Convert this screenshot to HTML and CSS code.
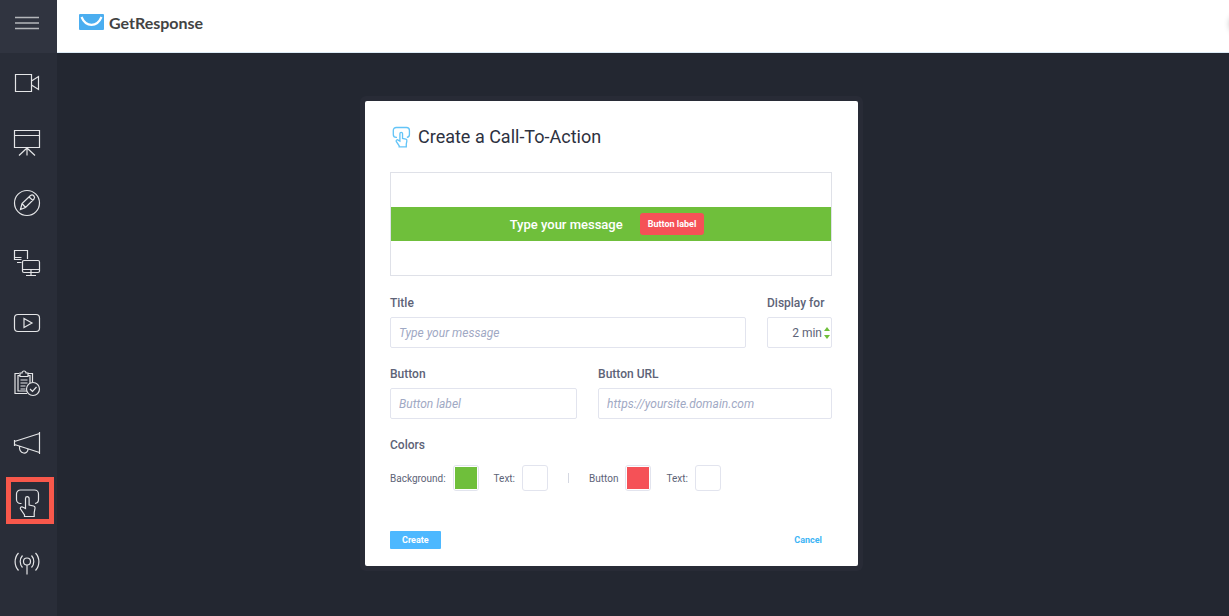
FILE: index.html
```html
<!DOCTYPE html>
<html lang="en">
<head>
    <meta charset="UTF-8">
    <meta name="viewport" content="width=device-width, initial-scale=1.0">
    <title>GetResponse - Create a Call-To-Action</title>
    <link rel="stylesheet" href="styles.css">
</head>
<body>
    <svg class="symbols" aria-hidden="true">
        <symbol id="tap" viewBox="0 0 30 30">
            <path d="M9.500 15.500H8.500a4 4 0 0 1-4-4V6a4 4 0 0 1 4-4h14a4 4 0 0 1 4 4v5.500a4 4 0 0 1-3.500 4"/>
            <path d="M13.500 20.500V10.500a1.800 1.800 0 0 1 3.600 0v6.500l4.500 1a2 2 0 0 1 1.400 2.200l-.8 4.500V28.500H12.500v-1.500L8.500 21c-.6-1.800 1.300-2.800 2.600-1.800z"/>
        </symbol>
    </svg>

    <div class="layout">
        <aside class="sidebar">
            <button class="menu-toggle" type="button" aria-label="Menu">
                <svg class="icon" viewBox="0 0 30 30"><path d="M3 9.500h24M3 15h24M3 20.500h24"/></svg>
            </button>
            <nav class="tools">
                <a href="#" class="tool" aria-label="Camera">
                    <svg class="icon" viewBox="0 0 30 30"><path d="M3.500 6.500h16v17h-16zM19.500 13l7-4.500v13l-7-4.500"/></svg>
                </a>
                <a href="#" class="tool" aria-label="Presentation">
                    <svg class="icon" viewBox="0 0 30 30"><path d="M2.500 2.500h25v17h-25zM2.500 7.500h25M15 19.500v8M15 20l-8 7.500M15 20l8 7.500"/></svg>
                </a>
                <a href="#" class="tool" aria-label="Whiteboard">
                    <svg class="icon" viewBox="0 0 30 30"><circle cx="15" cy="15" r="12.500"/><path d="M8.500 21.500l1.500-6L18.500 7.500a2.500 2.500 0 0 1 3.500 3.500l-8.500 8.500zM10 15.500l3.500 4M17 9l4 3.500"/></svg>
                </a>
                <a href="#" class="tool" aria-label="Screen sharing">
                    <svg class="icon" viewBox="0 0 30 30"><path d="M9.500 11.500h-7v-9h13v8.500M2.500 9.500h7M5 14.500h4.500"/><rect x="10.500" y="12.500" width="17" height="12" rx="1.500"/><path d="M10.500 21.500h17M19 21.500v6M14 27.500h10"/></svg>
                </a>
                <a href="#" class="tool" aria-label="Video">
                    <svg class="icon" viewBox="0 0 30 30"><rect x="2.500" y="6.500" width="25" height="17" rx="3.500"/><path d="M12 10.500v9l8-4.500z"/></svg>
                </a>
                <a href="#" class="tool" aria-label="Survey">
                    <svg class="icon" viewBox="0 0 30 30"><path d="M15 25.500H3v-20h4M15 23H6V7.500h2M20.500 14V5.500h-4M18 15V7.500h-2M8 8.500V5h2a2 2 0 0 1 4 0h2v3.500zM8.500 12h7M8.500 15h7M8.500 18h5M8.500 21h5"/><circle cx="21" cy="21" r="6.500"/><path d="M18 21l2.500 2.500 4-4.500"/></svg>
                </a>
                <a href="#" class="tool" aria-label="Announcement">
                    <svg class="icon" viewBox="0 0 30 30"><path d="M2.500 12v6M2.500 13.500l25-8M2.500 16.500l25 8M27.500 4v22M7.500 18.500c-.5 8 8.500 8.500 8.500 2.500"/></svg>
                </a>
                <a href="#" class="tool tool-active" aria-label="Call-To-Action">
                    <svg class="icon"><use href="#tap"/></svg>
                </a>
                <a href="#" class="tool" aria-label="Broadcast">
                    <svg class="icon" viewBox="0 0 30 30"><circle cx="15" cy="13.500" r="3.500"/><path d="M15 17v9.500M10.500 7.500a9 9 0 0 0 0 12M19.500 7.500a9 9 0 0 1 0 12M6.500 5a13 13 0 0 0 0 17.500M23.500 5a13 13 0 0 1 0 17.500"/></svg>
                </a>
            </nav>
        </aside>

        <div class="page">
            <header class="header">
                <a href="#" class="logo">
                    <svg class="logo-mark" viewBox="0 0 25 16" aria-hidden="true">
                        <rect width="25" height="16" rx="1" fill="#4baef0"/>
                        <path d="M2.500 3c4.500 10.500 15.500 10.500 20 0" fill="none" stroke="#fff" stroke-width="2.200"/>
                    </svg>
                    GetResponse
                </a>
            </header>

            <main class="stage">
                <form class="modal">
                    <h1 class="modal-title">
                        <svg class="modal-icon"><use href="#tap"/></svg>
                        Create a Call-To-Action
                    </h1>

                    <div class="preview">
                        <div class="preview-bar">
                            <span>Type your message</span>
                            <button class="preview-button" type="button">Button label</button>
                        </div>
                    </div>

                    <div class="row row-title">
                        <div class="field">
                            <label for="title">Title</label>
                            <input type="text" id="title" placeholder="Type your message">
                        </div>
                        <div class="field">
                            <label for="duration">Display for</label>
                            <div class="stepper">
                                <input type="text" id="duration" value="2 min">
                                <div class="stepper-buttons">
                                    <button type="button" class="step step-up" aria-label="More"></button>
                                    <button type="button" class="step step-down" aria-label="Less"></button>
                                </div>
                            </div>
                        </div>
                    </div>

                    <div class="row row-button">
                        <div class="field">
                            <label for="buttonLabel">Button</label>
                            <input type="text" id="buttonLabel" placeholder="Button label">
                        </div>
                        <div class="field">
                            <label for="buttonUrl">Button URL</label>
                            <input type="text" id="buttonUrl" placeholder="https://yoursite.domain.com">
                        </div>
                    </div>

                    <h2 class="colors-title">Colors</h2>
                    <div class="colors">
                        <label class="color">Background: <input type="color" value="#6fbf3b"></label>
                        <label class="color">Text: <input type="color" value="#ffffff"></label>
                        <span class="divider"></span>
                        <label class="color">Button <input type="color" value="#f55157"></label>
                        <label class="color">Text: <input type="color" value="#ffffff"></label>
                    </div>

                    <div class="actions">
                        <button class="create" type="submit">Create</button>
                        <button class="cancel" type="button">Cancel</button>
                    </div>
                </form>
            </main>
        </div>
    </div>
</body>
</html>
```
FILE: styles.css
```css
*,
*::after {
    box-sizing: border-box;
}
body {
    margin: 0;
    font-family: Roboto, sans-serif;
    background-color: #232731;
    color: #5d6377;
}
button {
    padding: 0;
    border: none;
    background: none;
    font-family: inherit;
    cursor: pointer;
}
.symbols {
    position: absolute;
    width: 0;
    height: 0;
}
.layout {
    display: flex;
    min-height: 100vh;
}

/* Sidebar */
.sidebar {
    flex: none;
    width: 57px;
    background-color: #292d38;
}
.menu-toggle {
    display: flex;
    align-items: center;
    width: 100%;
    height: 53px;
    padding: 0 0 7px 12px;
    background-color: #303440;
}
.icon {
    width: 30px;
    height: 30px;
    fill: none;
    stroke: #e4e5e7;
    stroke-width: 1.2;
}
.menu-toggle .icon {
    stroke: #b4b6ba;
    stroke-width: 1.5;
}
.tool {
    position: relative;
    display: flex;
    align-items: center;
    height: 60px;
    padding-left: 12px;
}
.tool-active::after {
    content: "";
    position: absolute;
    top: 4px;
    left: 6px;
    width: 48px;
    height: 47px;
    border: 5px solid #f8584b;
}

/* Header */
.page {
    flex: 1;
    display: flex;
    flex-direction: column;
    min-width: 0;
}
.header {
    position: relative;
    display: flex;
    align-items: center;
    height: 53px;
    padding: 0 22px 8px;
    overflow: hidden;
    background-color: #fff;
    border-bottom: 1px solid #dcebf6;
}
.header::after {
    content: "";
    position: absolute;
    top: 15px;
    right: -19px;
    width: 18px;
    height: 18px;
    border-radius: 50%;
    box-shadow: 0 0 6px rgba(0, 0, 0, 0.3);
}
.logo {
    display: flex;
    align-items: center;
    gap: 5px;
    color: #434343;
    font-family: Lato, sans-serif;
    font-size: 16px;
    font-weight: 700;
    text-decoration: none;
}
.logo-mark {
    width: 25px;
    height: 16px;
}

/* Modal */
.stage {
    display: flex;
    justify-content: center;
    align-items: flex-start;
    padding: 48px 63px 48px 0;
}
.modal {
    width: 100%;
    max-width: 493px;
    padding: 25px 26px 17px 25px;
    background-color: #fff;
    border-radius: 2px;
    box-shadow: 0 0 0 5px #282b36;
}
.modal-title {
    display: flex;
    align-items: center;
    gap: 6px;
    margin: 0 0 24px;
    color: #2d3140;
    font-size: 18px;
    font-weight: 400;
    line-height: 20px;
}
.modal-icon {
    width: 22px;
    height: 22px;
    fill: none;
    stroke: #63c4f7;
    stroke-width: 1.8;
}
.preview {
    padding: 34px 0;
    margin-bottom: 19px;
    border: 1px solid #dfe1e8;
}
.preview-bar {
    display: flex;
    justify-content: center;
    align-items: center;
    gap: 17px;
    height: 34px;
    padding-right: 8px;
    background-color: #6fbf3b;
    color: #fff;
    font-size: 13px;
    font-weight: 500;
}
.preview-button {
    height: 22px;
    padding: 0 8px;
    border-radius: 3px;
    background-color: #f55157;
    color: #fff;
    font-size: 9px;
    font-weight: 700;
}
.row {
    display: grid;
    gap: 21px;
    margin-bottom: 18px;
}
.row-title {
    grid-template-columns: 1fr 65px;
}
.row-button {
    grid-template-columns: 4fr 5fr;
}
.field label,
.colors-title {
    display: block;
    margin: 0 0 6px;
    font-size: 12px;
    font-weight: 500;
    line-height: 16px;
}
.field input {
    display: block;
    width: 100%;
    height: 31px;
    padding: 0 8px;
    border: 1px solid #e2e4ee;
    border-radius: 2px;
    color: #5d6377;
    font-family: inherit;
    font-size: 12px;
}
.field input::placeholder {
    color: #9fa9c4;
    font-style: italic;
}
.stepper {
    position: relative;
}
.stepper input {
    padding-right: 9px;
    text-align: right;
}
.stepper-buttons {
    position: absolute;
    top: 10px;
    right: 2px;
    display: flex;
    flex-direction: column;
    gap: 4px;
}
.step {
    border-left: 3px solid transparent;
    border-right: 3px solid transparent;
}
.step-up {
    border-bottom: 4px solid #6fbf3b;
}
.step-down {
    border-top: 4px solid #6fbf3b;
}
.colors-title {
    margin-bottom: 12px;
}
.colors {
    display: flex;
    align-items: center;
    gap: 15px;
    margin-bottom: 40px;
    font-size: 10px;
}
.color {
    display: flex;
    align-items: center;
    gap: 7px;
}
.color input {
    appearance: none;
    width: 26px;
    height: 26px;
    padding: 1px;
    border: 1px solid #e2e4ee;
    border-radius: 3px;
    background: none;
}
.color input::-webkit-color-swatch-wrapper {
    padding: 0;
}
.color input::-webkit-color-swatch {
    border: none;
}
.divider {
    width: 1px;
    height: 10px;
    margin: 0 5px;
    background-color: #d5d8e2;
}
.actions {
    display: flex;
    justify-content: space-between;
    padding-right: 10px;
}
.create,
.cancel {
    height: 18px;
    font-size: 9px;
    font-weight: 700;
}
.create {
    padding: 0 12px;
    border-radius: 1px;
    background-color: #4db8ff;
    color: #fff;
}
.cancel {
    color: #3db5f5;
}
```
